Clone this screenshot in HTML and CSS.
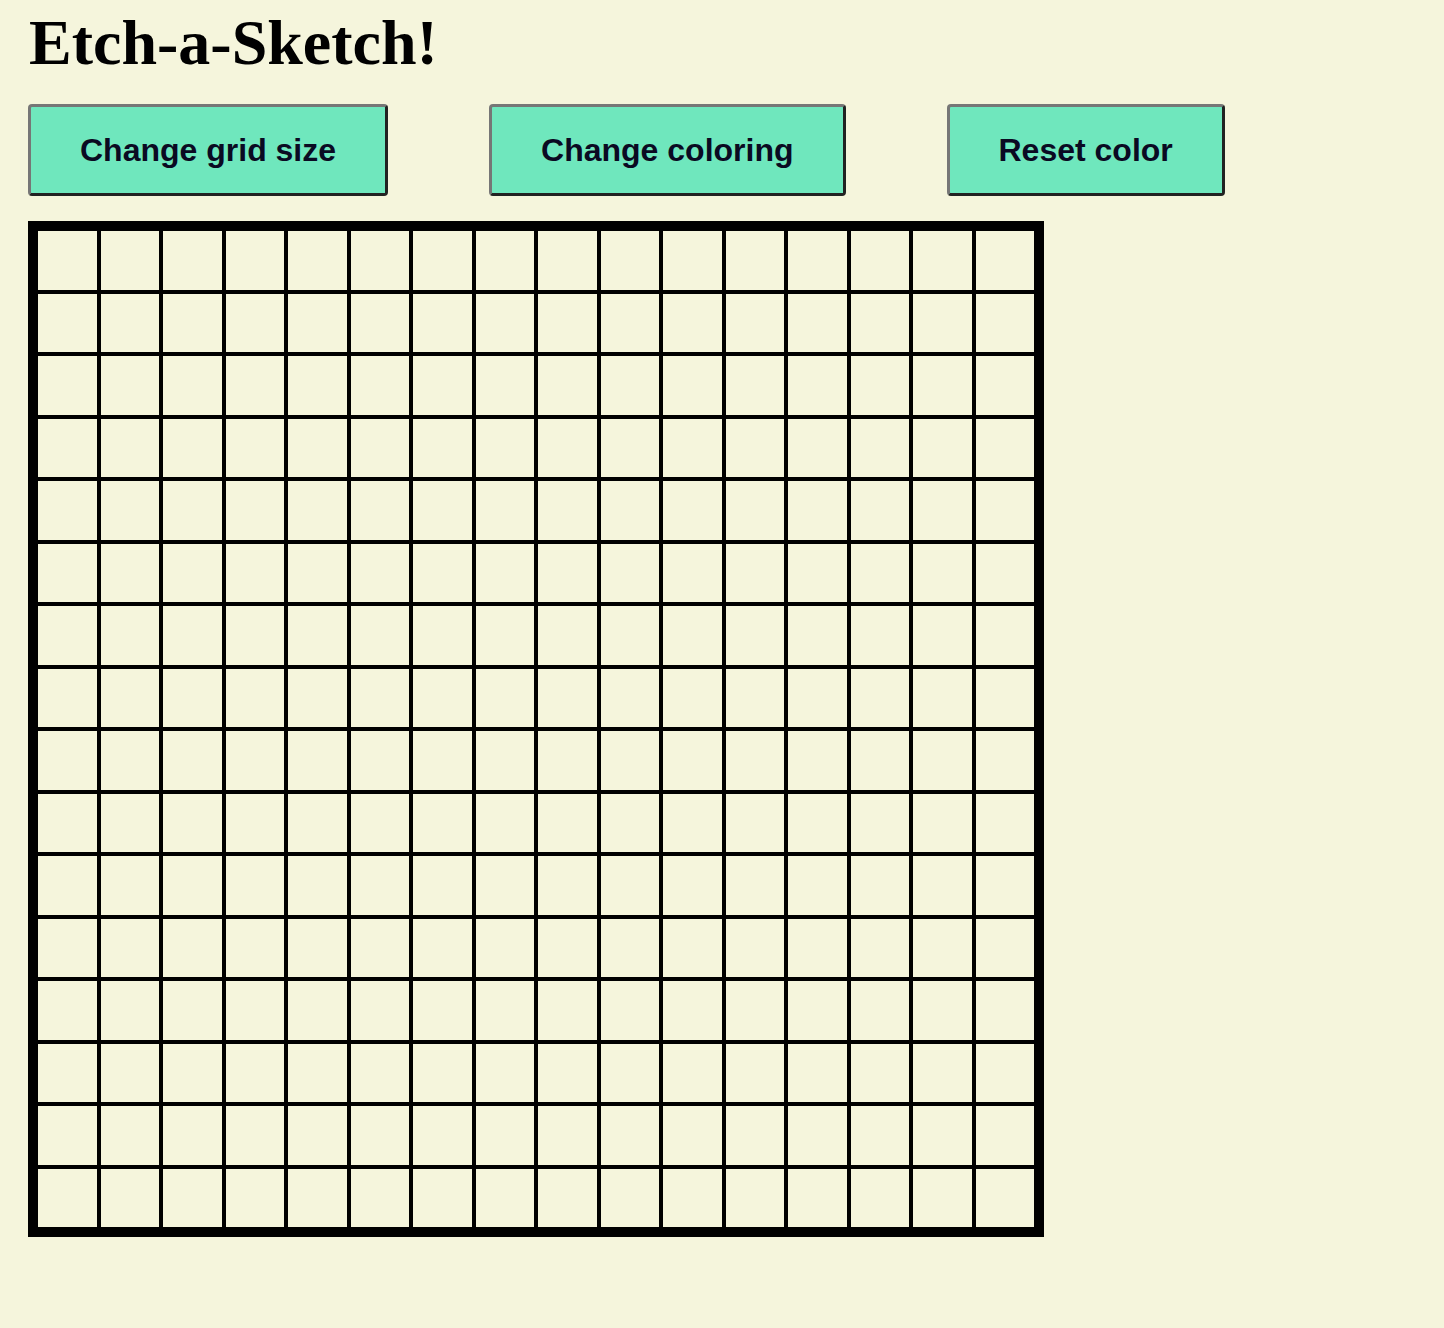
FILE: index.html
```html
<!DOCTYPE html>
<html lang="en">
<head>
<meta charset="utf-8">
<title>Etch-a-Sketch!</title>
<link rel="stylesheet" href="styles.css">
</head>
<body>
<h1 class="title">Etch-a-Sketch!</h1>
<div class="controls">
  <button class="btn">Change grid size</button>
  <button class="btn">Change coloring</button>
  <button class="btn">Reset color</button>
</div>
<div class="grid" id="grid"></div>
<script src="script.js"></script>
</body>
</html>
```
FILE: styles.css
```css
html, body {
  margin: 0;
  padding: 0;
  background: #f5f5dc;
}
body {
  padding: 0 28px;
}
.title {
  font-family: "Liberation Serif", "Times New Roman", serif;
  font-weight: bold;
  font-size: 64px;
  line-height: 74px;
  margin: 6px 0 0 1px;
  color: #000;
}
.controls {
  display: flex;
  gap: 101px;
  margin-top: 24px;
}
.btn {
  font-family: "Liberation Sans", Arial, sans-serif;
  font-weight: bold;
  font-size: 32px;
  line-height: 34px;
  color: #0a0a22;
  background: #6fe7bd;
  padding: 26px 49px;
  border-style: solid;
  border-width: 3px;
  border-color: #767676 #222 #222 #767676;
  border-radius: 4px;
  cursor: pointer;
}
.grid {
  margin-top: 25px;
  width: 1000px;
  height: 1000px;
  border: 8px solid #000;
  display: grid;
  grid-template-columns: repeat(16, 1fr);
  grid-template-rows: repeat(16, 1fr);
}
.cell {
  border: 2px solid #000;
  background: #f5f5dc;
}
```
FILE: script.js
```js
const grid = document.getElementById('grid');
for (let i = 0; i < 256; i++) {
  const c = document.createElement('div');
  c.className = 'cell';
  grid.appendChild(c);
}
```
